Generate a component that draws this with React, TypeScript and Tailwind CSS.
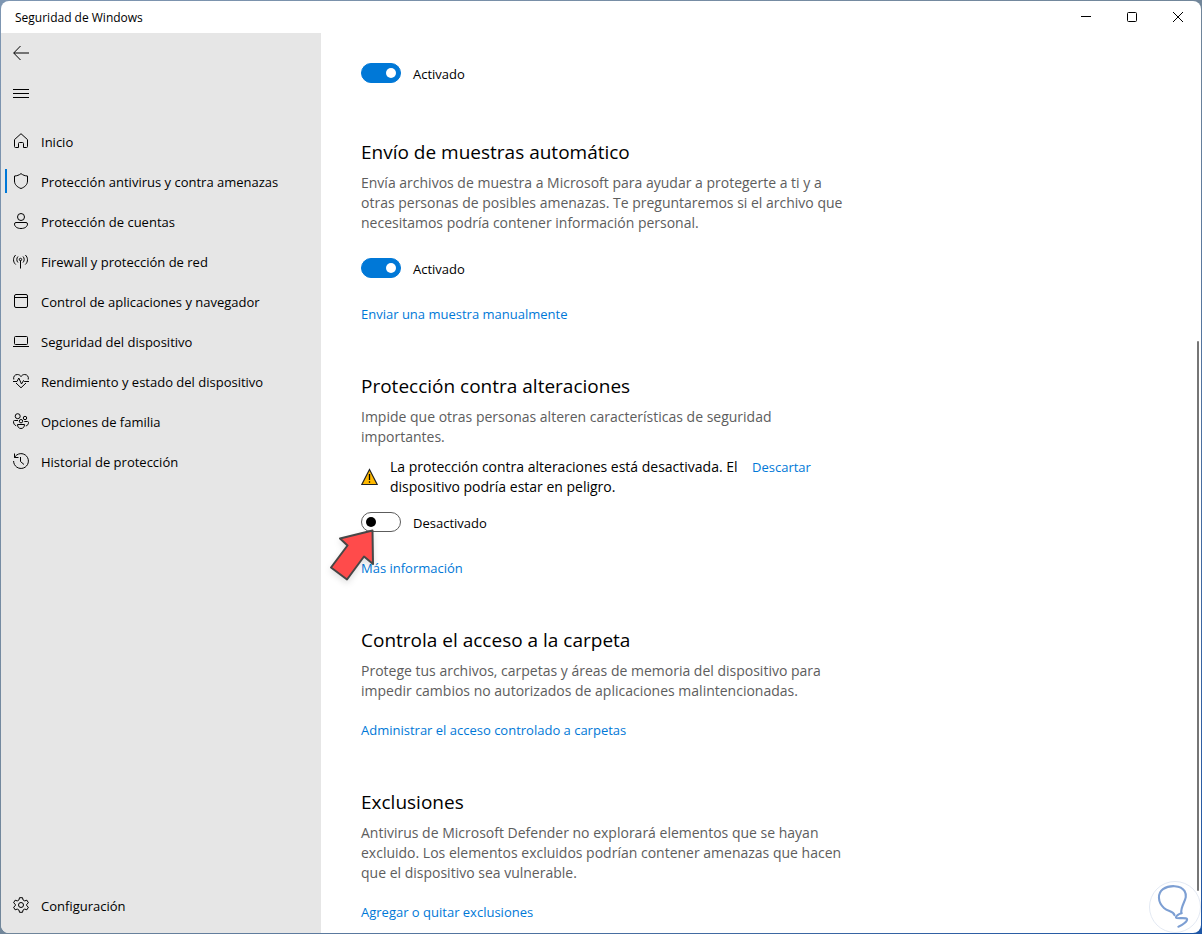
import { useState } from 'react'
import type { ReactNode } from 'react'

type IconProps = { children: ReactNode }

function Icon({ children }: IconProps) {
  return (
    <svg viewBox="0 0 16 16" className="h-4 w-4 shrink-0" fill="none" stroke="currentColor" strokeWidth="1" aria-hidden="true">
      {children}
    </svg>
  )
}

const navItems = [
  {
    label: 'Inicio',
    icon: (
      <path d="M1.5 6.6 8 .7l6.500 5.900v6.900a1 1 0 0 1-1 1h-3v-4a1 1 0 0 0-1-1h-3a1 1 0 0 0-1 1v4h-3a1 1 0 0 1-1-1z" />
    ),
  },
  {
    label: 'Protección antivirus y contra amenazas',
    icon: <path d="M8 .6c1.900 1.500 4 2.300 6.500 2.400v5c0 3.500-2.500 6-6.500 7.500C4 14 1.500 11.500 1.500 8V3C4 2.900 6.100 2.100 8 .6z" />,
  },
  {
    label: 'Protección de cuentas',
    icon: (
      <>
        <circle cx="8" cy="4" r="3.5" />
        <path d="M3 9.500h10a1.500 1.500 0 0 1 1.500 1.500c0 2.500-2.500 4.500-6.500 4.500S1.500 13.500 1.500 11A1.500 1.500 0 0 1 3 9.500z" />
      </>
    ),
  },
  {
    label: 'Firewall y protección de red',
    icon: (
      <>
        <circle cx="7.500" cy="6.500" r="1.200" />
        <path d="M7.500 7.500v8M5 9.500C3.400 8 3.400 5 5 3.500M10 9.500c1.600-1.500 1.600-4.500 0-6M2.700 11.500C-.2 9-.2 4.500 2.700 2M12.300 11.500c2.900-2.500 2.900-7 0-9.500" />
      </>
    ),
  },
  {
    label: 'Control de aplicaciones y navegador',
    icon: (
      <>
        <rect x="1.500" y="1.500" width="13" height="13" rx="1.500" />
        <path d="M1.500 4.500h13" />
      </>
    ),
  },
  {
    label: 'Seguridad del dispositivo',
    icon: (
      <>
        <rect x="1.500" y="3.500" width="13" height="8" rx="1" />
        <path d="M0 13.500h16" />
      </>
    ),
  },
  {
    label: 'Rendimiento y estado del dispositivo',
    icon: (
      <>
        <path d="M.8 6.500C0 4 1.600 1.500 4.300 1.500 6 1.500 7.300 2.300 8 3.600c.7-1.300 2-2.100 3.700-2.100 2.700 0 4.300 2.500 3.500 5M3 10l5 4.800L13 10" />
        <path d="M0 8.500h4L5.800 5l2.700 6 2-3.500.8 1H16" />
      </>
    ),
  },
  {
    label: 'Opciones de familia',
    icon: (
      <>
        <circle cx="4.700" cy="3.200" r="2.500" />
        <circle cx="12" cy="5" r="1.700" />
        <circle cx="8" cy="8.200" r="1.700" />
        <path d="M4.500 11.500h7c0 2.500-1.400 4-3.500 4s-3.500-1.500-3.500-4zM5 7.500H1.500c-.6 0-1 .4-1 1 0 2.200 1 3.800 2.700 4.200M11.300 8.500h3.200c.6 0 1 .4 1 1 0 1.800-1 3.200-2.700 3.400" />
      </>
    ),
  },
  {
    label: 'Historial de protección',
    icon: <path d="M1.500 4.500A7.400 7.400 0 1 1 .6 8M1.500.5v4h4M7.500 4v4.500l3.500 3" />,
  },
]

function Toggle({ label, defaultChecked }: { label: string; defaultChecked?: boolean }) {
  return (
    <label className="flex h-5 w-fit items-center gap-3 text-[13px] leading-5">
      <input
        type="checkbox"
        role="switch"
        defaultChecked={defaultChecked}
        className="flex h-5 w-10 shrink-0 appearance-none items-center rounded-full border border-[#5c5c5c] bg-white px-1 before:h-[10px] before:w-[10px] before:rounded-full before:bg-black checked:justify-end checked:border-[#0078d7] checked:bg-[#0078d7] checked:before:bg-white"
      />
      <span className="pt-[2px]">{label}</span>
    </label>
  )
}

function Link({ children }: { children: ReactNode }) {
  return (
    <a href="#" className="block w-fit text-[13px] leading-5 text-[#0078d7] hover:underline">
      {children}
    </a>
  )
}

function Section({ title, text, children }: { title: string; text: string; children: ReactNode }) {
  return (
    <section className="mb-12">
      <h2 className="mb-[7px] text-[19px] leading-7">{title}</h2>
      <p className="text-sm leading-5 text-[#5d5d5d]">{text}</p>
      {children}
    </section>
  )
}

export default function App() {
  const [active, setActive] = useState(1)

  return (
    <div className="h-screen bg-linear-to-br from-[#7e96b2] via-[#71869a] to-[#1c55a5] p-px font-['Open_Sans','Noto_Sans',sans-serif] text-black">
      <div className="relative flex h-full flex-col overflow-hidden rounded-lg bg-white">
        <header className="flex h-8 shrink-0 items-center justify-between pl-[14px]">
          <h1 className="pt-[2px] text-xs">Seguridad de Windows</h1>
          <div className="flex h-full">
            <button type="button" aria-label="Minimizar" className="flex w-[46px] items-center justify-center hover:bg-gray-200">
              <Icon><path d="M3 7.500h10" /></Icon>
            </button>
            <button type="button" aria-label="Maximizar" className="flex w-[46px] items-center justify-center hover:bg-gray-200">
              <Icon><rect x="3.500" y="3.500" width="9" height="9" rx="1" /></Icon>
            </button>
            <button type="button" aria-label="Cerrar" className="flex w-[46px] items-center justify-center hover:bg-red-500">
              <Icon><path d="m3 3 10 10M13 3 3 13" /></Icon>
            </button>
          </div>
        </header>

        <div className="flex min-h-0 flex-1">
          <aside className="flex w-80 shrink-0 flex-col bg-[#e6e6e6] pb-2">
            <button type="button" aria-label="Atrás" className="flex h-10 w-10 items-center justify-center">
              <Icon><path d="M16 8H.8M7.500 1 .7 8l6.800 7" /></Icon>
            </button>
            <button type="button" aria-label="Menú" className="mb-2 flex h-10 w-10 items-center justify-center">
              <Icon><path d="M0 4.500h16M0 8.500h16M0 12.500h16" /></Icon>
            </button>
            <nav className="flex flex-1 flex-col">
              {navItems.map((item, i) => (
                <button
                  key={item.label}
                  type="button"
                  aria-current={i === active ? 'page' : undefined}
                  onClick={() => setActive(i)}
                  className="relative flex h-10 items-center gap-3 pl-3 text-left text-[13px] leading-5"
                >
                  {i === active && <span className="absolute left-1 h-6 w-[2px] bg-[#0078d7]" />}
                  <Icon>{item.icon}</Icon>
                  <span className="pt-[2px]">{item.label}</span>
                </button>
              ))}
              <button type="button" className="mt-auto flex h-10 items-center gap-3 pl-3 text-left text-[13px] leading-5">
                <Icon>
                  <circle cx="8" cy="8" r="2.500" />
                  <path d="M6.500.7h3l.5 2.200 1.700 1 2.200-.7 1.500 2.600L13.700 7.300v1.400l1.700 1.500-1.500 2.600-2.200-.7-1.700 1-.5 2.200h-3L6 13.100l-1.700-1-2.200.7-1.500-2.600 1.700-1.500V7.300L.6 5.800l1.500-2.600 2.200.7 1.700-1z" strokeLinejoin="round" />
                </Icon>
                <span className="pt-[2px]">Configuración</span>
              </button>
            </nav>
          </aside>

          <main className="min-w-0 flex-1 overflow-hidden px-10 pt-[30px]">
            <div className="max-w-[490px]">
              <div className="mb-[55px]">
                <Toggle label="Activado" defaultChecked />
              </div>

              <Section
                title="Envío de muestras automático"
                text="Envía archivos de muestra a Microsoft para ayudar a protegerte a ti y a otras personas de posibles amenazas. Te preguntaremos si el archivo que necesitamos podría contener información personal."
              >
                <div className="mt-[25px] mb-[26px]">
                  <Toggle label="Activado" defaultChecked />
                </div>
                <Link>Enviar una muestra manualmente</Link>
              </Section>

              <Section
                title="Protección contra alteraciones"
                text="Impide que otras personas alteren características de seguridad importantes."
              >
                <div className="mt-[10px] flex items-start gap-3">
                  <svg viewBox="0 0 17 18" className="h-[18px] w-[17px] shrink-0 self-center" aria-hidden="true">
                    <path d="M8.500 1.500.8 16.500h15.400z" fill="#ffb900" stroke="#222" strokeWidth="1.200" />
                    <path d="M8.500 6v6M8.500 13.300v1.500" stroke="#000" strokeWidth="1.300" />
                  </svg>
                  <p className="w-[350px] text-sm leading-5">
                    La protección contra alteraciones está desactivada. El dispositivo podría estar en peligro.
                  </p>
                  <Link>Descartar</Link>
                </div>
                <div className="relative mt-[15px] mb-[26px]">
                  <Toggle label="Desactivado" />
                  <svg viewBox="0 0 48 54" className="pointer-events-none absolute top-[16px] left-[-32px] h-[54px] w-[48px] drop-shadow-md" aria-hidden="true">
                    <path d="M43.500 2.500 11 10.500l7.500 7L2 39.500 18 51.500l17-23L44 36z" fill="#ff4b4b" stroke="#474747" strokeWidth="2" strokeLinejoin="round" />
                  </svg>
                </div>
                <Link>Más información</Link>
              </Section>

              <Section
                title="Controla el acceso a la carpeta"
                text="Protege tus archivos, carpetas y áreas de memoria del dispositivo para impedir cambios no autorizados de aplicaciones malintencionadas."
              >
                <div className="mt-[19px]">
                  <Link>Administrar el acceso controlado a carpetas</Link>
                </div>
              </Section>

              <Section
                title="Exclusiones"
                text="Antivirus de Microsoft Defender no explorará elementos que se hayan excluido. Los elementos excluidos podrían contener amenazas que hacen que el dispositivo sea vulnerable."
              >
                <div className="mt-[19px]">
                  <Link>Agregar o quitar exclusiones</Link>
                </div>
              </Section>
            </div>
          </main>
        </div>

        {/* Scroll thumb */}
        <div className="absolute right-[2px] bottom-[42px] h-[59%] w-[2px] rounded-full bg-[#767676]" />

        {/* Corner badge */}
        <div className="absolute right-0 bottom-0 h-[52px] w-[52px] rounded-full border border-[#e3e9f3] bg-white">
          <svg viewBox="0 0 52 52" className="h-full w-full" fill="none" stroke="#7d9fd3" strokeWidth="2.200" strokeLinecap="round" aria-hidden="true">
            <path d="M25.500 34.500C24 30 19 31 14.500 27 8 21 7.500 12 13.500 7.500 20 3 32 3 36 9.500c4.500 8-4 13-3.500 22.500" />
            <path d="M33 32.500c-3 .5-6.500 3-6 4.500.7 1.500 10.500-.5 11.500 1.500.8 2-4.500 6.500-9 8" />
          </svg>
        </div>
      </div>
    </div>
  )
}
